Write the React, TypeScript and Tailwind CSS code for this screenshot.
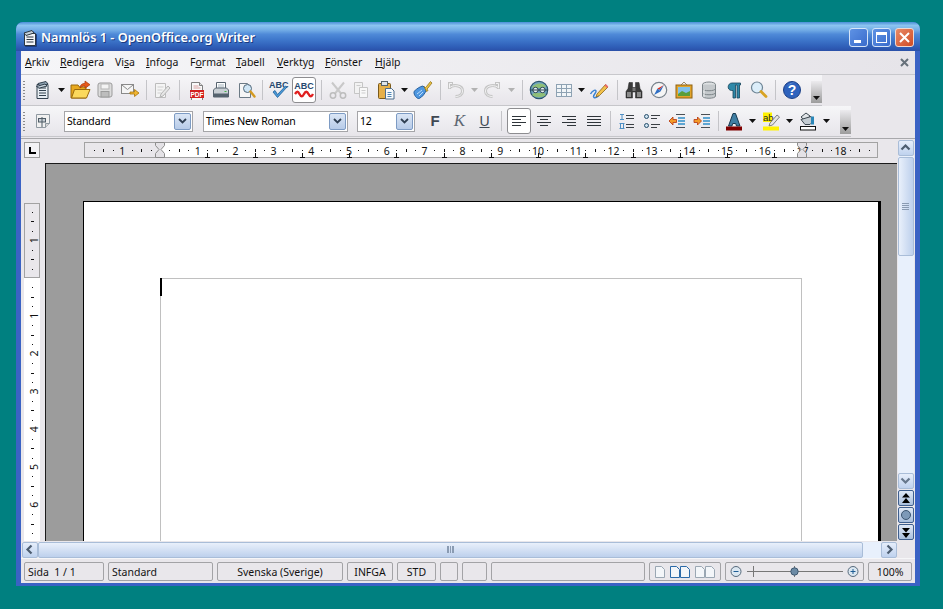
import React from "react";

const FONT = "font-['Noto_Sans','Liberation_Sans',sans-serif]";

type P = { children: React.ReactNode; s?: number; h?: number };
const Svg = ({ children, s = 20, h }: P) => (
  <svg width={s} height={h ?? s} viewBox={`0 0 ${s} ${h ?? s}`} className="block">
    {children}
  </svg>
);

const DocIcon = () => (
  <Svg>
    <path d="M4 4.500h11v14H4z" fill="#e8eef3" stroke="#33424f" />
    <path d="M6 8h7M6 10.500h7M6 13h7M6 15.500h7" stroke="#33424f" />
    <path d="M5 3.500 13 1.500l2 2.500-8 2z" fill="#8fa4b4" stroke="#33424f" />
    <path d="M3.500 6.500 12 4l2 2-8 2.200z" fill="#c6d3dc" stroke="#33424f" />
  </Svg>
);
const Open = () => (
  <Svg s={22}>
    <path d="M2 6h7l1.500 2H17v11H2z" fill="#e7a91e" stroke="#9a6a0c" />
    <path d="M2.500 19 5.500 10.500H21L17.500 19z" fill="#fbd95c" stroke="#9a6a0c" />
    <path d="M11 9c0-3 2-4.500 5-4.700V2l5 3.700-5 3.600V7c-2 0-3.500.6-5 2z" fill="#e8591a" stroke="#a33a08" strokeWidth=".7" />
  </Svg>
);
const Save = () => (
  <Svg>
    <rect x="3" y="3" width="14" height="14" rx="2" fill="#dcdcdc" stroke="#9b9b9b" />
    <rect x="6" y="4" width="8" height="5" fill="#f3f3f3" stroke="#b5b5b5" />
    <rect x="6" y="11.500" width="8" height="5.500" fill="#bdbdbd" stroke="#9b9b9b" />
  </Svg>
);
const Mail = () => (
  <Svg>
    <rect x="1.500" y="4.500" width="12" height="9" fill="#f5f5f5" stroke="#8a8a8a" />
    <path d="M2 5l5.500 4.500L13 5" fill="none" stroke="#8a8a8a" />
    <path d="M10 12h4.500V9.500l4.500 3.500-4.500 3.500V14H10z" fill="#f2b632" stroke="#a87509" strokeWidth=".8" />
  </Svg>
);
const Sep = () => <div className="w-px h-[20px] bg-[#c4c4c8]" />;
const EditDoc = () => (
  <Svg>
    <path d="M3.500 3.500h10v14h-10z" fill="#f4f4f4" stroke="#bcbcbc" />
    <path d="M5.500 7h6M5.500 10h5M5.500 13h4" stroke="#cfcfcf" />
    <path d="M9 14l7-8 2 2-7 8-3 1z" fill="#e6e6e6" stroke="#b5b5b5" />
  </Svg>
);
const Pdf = () => (
  <Svg>
    <path d="M4.500 2.500h8l3 3v15h-11z" fill="#f8f8f8" stroke="#7f7f7f" />
    <path d="M12.500 2.500v3h3" fill="#ddd" stroke="#7f7f7f" />
    <path d="M6.500 6h5M6.500 8h7" stroke="#d8a0a0" />
    <rect x="3" y="10" width="14" height="8" fill="#d3201f" />
    <text x="10" y="16.500" fontSize="6.500" fontWeight="700" fill="#fff" textAnchor="middle" fontFamily="Liberation Sans">PDF</text>
  </Svg>
);
const Print = () => (
  <Svg>
    <path d="M5.500 2.500h9v7h-9z" fill="#fff" stroke="#56636e" />
    <path d="M7 5h6M7 7h6" stroke="#a5b3bd" />
    <path d="M2.500 10l2-2h11l2 2v7h-15z" fill="#c9cfd4" stroke="#56636e" />
    <rect x="3" y="13.500" width="14" height="3.500" fill="#56636e" />
    <rect x="13.500" y="11" width="2" height="1" fill="#47b04b" />
  </Svg>
);
const Preview = () => (
  <Svg>
    <path d="M3.500 3.500h8l3 3v11h-11z" fill="#f6f6f6" stroke="#6c7a85" />
    <circle cx="11.500" cy="8.500" r="4" fill="#cfe6f6" stroke="#52687a" />
    <path d="M14.500 11.500l4 5" stroke="#d49a20" strokeWidth="2.400" strokeLinecap="round" />
  </Svg>
);
const Spell = () => (
  <Svg s={22}>
    <text x="1" y="9" fontSize="9" fontWeight="700" fill="#27486e" fontFamily="Liberation Sans">ABC</text>
    <path d="M5 13l4.500 5.500L19 8l-1.500-1-8 8.500L7 11.500z" fill="#4b9ad8" stroke="#1e5f99" strokeWidth=".8" />
  </Svg>
);
const AutoSpell = () => (
  <Svg s={22}>
    <text x="11" y="10" fontSize="9" fontWeight="700" fill="#27486e" textAnchor="middle" fontFamily="Liberation Sans">ABC</text>
    <path d="M2 15c2-3 3-3 4.500 0s3 3 4.500 0 3-3 4.500 0 3 3 4.500 0" fill="none" stroke="#e02020" strokeWidth="2.400" />
  </Svg>
);
const Cut = () => (
  <Svg>
    <path d="M4 2.500l9 11M16 2.500l-9 11" stroke="#c9c9c9" strokeWidth="2" />
    <circle cx="5" cy="15.500" r="2.700" fill="none" stroke="#bdbdbd" strokeWidth="1.500" />
    <circle cx="15" cy="15.500" r="2.700" fill="none" stroke="#bdbdbd" strokeWidth="1.500" />
  </Svg>
);
const Copy = () => (
  <Svg>
    <path d="M3.500 2.500h8v11h-8z" fill="#f2f2f2" stroke="#c5c5c5" />
    <path d="M8.500 7.500h8v10h-8z" fill="#f8f8f8" stroke="#c5c5c5" />
    <path d="M10.500 10.500h4M10.500 13h4M5.500 5.500h4" stroke="#cdcdcd" />
  </Svg>
);
const Paste = () => (
  <Svg>
    <rect x="2.500" y="3.500" width="12" height="15" rx="1" fill="#e5b04a" stroke="#7b5a1a" />
    <rect x="5.500" y="1.500" width="6" height="4" fill="#dfe6ec" stroke="#55636e" />
    <path d="M9.500 8.500h6l2.500 2.500v8h-8.500z" fill="#f7fafc" stroke="#4c6d8c" />
    <path d="M11.500 12.500h4M11.500 14.500h4M11.500 16.500h4" stroke="#4d86b6" />
  </Svg>
);
const Brush = () => (
  <Svg>
    <path d="M1 11.500c3-3 6-5 9-5.500l3.500 3.500C12.500 13 9 17.500 6 18.500c-2 .5-5.500-3.500-5-7z" fill="#4f97e0" stroke="#27609e" />
    <path d="M4 14l5-4M6 16l4-4" stroke="#bcdcf8" />
    <path d="M11 6.500l1.500 1 1-1 4-5 1.500 1.500-4 5-1 1 1 1.500-1.500 1z" fill="#e9c243" stroke="#8a6a10" strokeWidth=".7" />
  </Svg>
);
const Undo = ({ flip }: { flip?: boolean }) => (
  <Svg>
    <g transform={flip ? "translate(20,0) scale(-1,1)" : undefined}>
      <path d="M7 3.500H3.500V9M3.500 8C6 4.500 16.500 4.500 16.500 11c0 3.500-3 5.500-7 5.500" fill="none" stroke="#c4c4c4" strokeWidth="3" />
      <path d="M6 3.500H3.500V8M3.500 8C6 4.500 16.500 4.500 16.500 11c0 3.500-3 5.500-7 5.500" fill="none" stroke="#f2f2f3" strokeWidth="1" />
    </g>
  </Svg>
);
const Nav = () => (
  <Svg s={22}>
    <circle cx="11" cy="11" r="8.700" fill="#6fa5bf" stroke="#2d566e" strokeWidth="1.200" />
    <path d="M4 8c3-4 10-5 14-1l-2 2H6zM4 16c4 3 10 3 14 0l-2-2H6z" fill="#8fbf78" />
    <circle cx="7.500" cy="11" r="2.700" fill="#e8f2f6" stroke="#27414f" />
    <circle cx="14.500" cy="11" r="2.700" fill="#e8f2f6" stroke="#27414f" />
    <path d="M2.500 11h17" stroke="#27414f" />
  </Svg>
);
const Table = () => (
  <Svg>
    <rect x="2.500" y="4.500" width="15" height="12" fill="#f1f5f8" stroke="#8ea2b3" />
    <path d="M2.500 8.500h15M2.500 12.500h15M7.500 4.500v12M12.500 4.500v12" stroke="#8ea2b3" />
  </Svg>
);
const Draw = () => (
  <Svg>
    <path d="M1.500 14c2-4 6-5 5.500-2.500S3 16 5 17.500c2 1 4-1 5-2" fill="none" stroke="#3a82d2" strokeWidth="1.400" />
    <path d="M8 14l8.500-9.500 2.500 2.500-8.500 8.500-3.500 1.500z" fill="#f2c14b" stroke="#8a6518" strokeWidth=".8" />
    <path d="M15.500 5.500l2.500 2.500 1.300-1.500-2.500-2.500z" fill="#e86a6a" />
  </Svg>
);
const Binoc = () => (
  <Svg>
    <path d="M5 2.500h3.500v5H11.500v-5H15l1 6 2 3v6.500h-6.500v-6h-3v6H2V11.500l2-3z" fill="#3a3a3a" stroke="#222" strokeWidth=".5" />
    <rect x="3" y="12" width="4" height="5" fill="#8b8b8b" />
    <rect x="13" y="12" width="4" height="5" fill="#8b8b8b" />
    <rect x="8.500" y="8" width="3" height="3" fill="#777" />
  </Svg>
);
const Compass = () => (
  <Svg>
    <circle cx="10" cy="10" r="7.700" fill="#f5f5f5" stroke="#77828b" strokeWidth="1.200" />
    <path d="M15 5l-6.500 3.500L10 10z" fill="#e03020" />
    <path d="M5 15l3.500-6.500L11.500 11.500z" fill="#2f6fc4" />
    <path d="M15 5L11.500 11.500 10 10z" fill="#2f6fc4" />
  </Svg>
);
const Gallery = () => (
  <Svg>
    <path d="M7 5l3-3 3 3" fill="none" stroke="#9b8a68" />
    <rect x="2" y="5" width="16" height="13" fill="#e3a42a" stroke="#8f6212" />
    <rect x="4" y="7" width="12" height="9" fill="#7fc0ea" />
    <path d="M4 14l4-3 4 2 4-2v5H4z" fill="#5a9e3a" />
  </Svg>
);
const Db = () => (
  <Svg>
    <ellipse cx="10" cy="4.500" rx="6.500" ry="2.500" fill="#dfe2e4" stroke="#7d8589" />
    <path d="M3.500 4.500v11.500c0 3 13 3 13 0V4.500" fill="#c5c9cc" stroke="#7d8589" />
    <path d="M3.500 8.500c0 3 13 3 13 0M3.500 12.500c0 3 13 3 13 0" fill="none" stroke="#7d8589" />
    <path d="M5 9v8" stroke="#eef0f1" />
  </Svg>
);
const Pilcrow = () => (
  <Svg>
    <path d="M16.500 3H8C3.500 3 2.500 10 7.500 10.500H9V18h2.500V5h1.500v13h2.500V5h1z" fill="#2e88a8" stroke="#17445a" strokeWidth=".8" />
  </Svg>
);
const Zoom = () => (
  <Svg>
    <circle cx="8" cy="7.500" r="5.500" fill="#dceefa" stroke="#6e8494" strokeWidth="1.200" />
    <path d="M12 11.500l5 5" stroke="#d8a324" strokeWidth="2.800" strokeLinecap="round" />
  </Svg>
);
const Help = () => (
  <Svg>
    <circle cx="10" cy="10" r="8.500" fill="#2f63bd" stroke="#1b3f86" />
    <path d="M5 7c1-3 4-5 8-4-5 0-7 2-8 4z" fill="#8fb3ea" />
    <text x="10" y="15" fontSize="14" fontWeight="700" fill="#fff" textAnchor="middle" fontFamily="Liberation Sans">?</text>
  </Svg>
);
const StyleIco = () => (
  <Svg>
    <path d="M3.500 3.500h13v9l-4 4h-9z" fill="#f0f0f0" stroke="#8f99a1" />
    <path d="M12.500 16.500v-4h4" fill="#d4d4d4" stroke="#8f99a1" />
    <rect x="5.500" y="7.500" width="7" height="3.500" fill="#c9d0d6" stroke="#4f5c66" />
    <path d="M9 6v10" stroke="#4f5c66" />
  </Svg>
);
const Numbered = () => (
  <Svg>
    <path d="M9 4.500h8M9 7.500h8M9 13.500h8M9 16.500h8" stroke="#3a3f44" strokeWidth="1.200" />
    <path d="M3 3.500h4M5 3.500v5M3 8.500h4M2.500 12.500h5M3.500 12.500v5M6.500 12.500v5M2.500 17.500h5" stroke="#4f8fc4" />
  </Svg>
);
const Bullets = () => (
  <Svg>
    <circle cx="4.500" cy="5.500" r="2" fill="#cde2f0" stroke="#274e6b" />
    <circle cx="4.500" cy="14.500" r="2" fill="#cde2f0" stroke="#274e6b" />
    <path d="M9 4.500h9M9 7.500h6M9 13.500h9M9 16.500h6" stroke="#3a3f44" strokeWidth="1.200" />
  </Svg>
);
const Indent = ({ right }: { right?: boolean }) => (
  <Svg>
    <path d="M9 3.500h9M9 16.500h9" stroke="#4a4f55" />
    <path d="M11 7h7M11 10h7M11 13h7" stroke="#2f8fc9" strokeWidth="1.500" />
    {right ? (
      <path d="M2 8.500h3.500V6l4 4-4 4v-2.500H2z" fill="#f29a28" stroke="#b5340c" strokeWidth=".8" />
    ) : (
      <path d="M9.500 8.500H6V6l-4 4 4 4v-2.500h3.500z" fill="#f29a28" stroke="#b5340c" strokeWidth=".8" />
    )}
  </Svg>
);
const FontColor = () => (
  <Svg>
    <path d="M4.500 15L9 2.500h2.500L16 15h-3.500l-.8-2.500H8.700L7.900 15z" fill="#3f7ea3" stroke="#16384e" />
    <rect x="2" y="15.500" width="16" height="4" fill="#800000" />
  </Svg>
);
const Highlight = () => (
  <Svg>
    <rect x="2" y="1.500" width="9" height="9.500" fill="#fff200" />
    <text x="2" y="10" fontSize="9.500" fill="#222" fontFamily="Liberation Sans">ab</text>
    <path d="M9 12l7-8 2.500 2-7 8-3.500 1z" fill="#e5e5e5" stroke="#666" strokeWidth=".8" />
    <rect x="2" y="15.500" width="16" height="4" fill="#fff200" />
  </Svg>
);
const Bg = () => (
  <Svg>
    <path d="M3 6l5-4 4 3-4.500 5z" fill="#e0e4e7" stroke="#3d4850" />
    <path d="M3 8.500l4 5h5l3-3-2-5z" fill="#c4ccd2" stroke="#3d4850" />
    <path d="M13 5.500h3v8h-3z" fill="#2b87b8" />
    <rect x="2.500" y="15.500" width="15" height="3.500" fill="#fff" stroke="#111" />
  </Svg>
);

const Dd = () => (
  <svg width="7" height="4" viewBox="0 0 7 4" className="block"><path d="M0 0h7L3.500 4z" fill="#111" /></svg>
);
const DdGray = () => (
  <svg width="7" height="4" viewBox="0 0 7 4" className="block"><path d="M0 0h7L3.500 4z" fill="#b2b2b2" /></svg>
);

const Slot = ({ w, children, active }: { w: number; children?: React.ReactNode; active?: boolean }) => (
  <div className="flex items-center justify-center shrink-0" style={{ width: w }}>
    {active ? (
      <div className="w-[24px] h-[26px] bg-white border border-[#8d8d90] rounded-[3px] flex items-center justify-center">{children}</div>
    ) : (
      children
    )}
  </div>
);

const Grip = () => (
  <div className="w-[8px] ml-[2px] flex flex-col gap-[2px] shrink-0">
    {[0, 1, 2, 3, 4, 5, 6].map((i) => (
      <div key={i} className="w-[2px] h-[1px] bg-[#8b8b8b]" />
    ))}
  </div>
);

const Overflow = ({ h }: { h: number }) => (
  <div
    className="w-[11px] ml-auto self-end mb-[2px] bg-gradient-to-b from-[#ecebee] to-[#9d9d9d] flex items-end justify-center pb-[3px] shrink-0"
    style={{ height: h }}
  >
    <Dd />
  </div>
);

const Combo = ({ w, label, ml }: { w: number; label: string; ml: number }) => (
  <div
    className="h-[21px] bg-white border border-[#a5a5a8] flex items-center justify-between pl-[2px] pr-[1px] shrink-0 text-[10.5px] tracking-[-0.15px] text-black"
    style={{ width: w, marginLeft: ml }}
  >
    <span className="pt-[2px]">{label}</span>
    <div className="w-[17px] h-[17px] rounded-[2px] border border-[#7d9bc4] bg-gradient-to-b from-[#dbe6f5] to-[#b7cbe8] flex items-center justify-center">
      <svg width="9" height="6" viewBox="0 0 9 6"><path d="M1 1l3.500 3.500L8 1" fill="none" stroke="#2f3f52" strokeWidth="1.800" /></svg>
    </div>
  </div>
);

const Chevron = ({ dir, color = "#4d5d70" }: { dir: "u" | "d" | "l" | "r"; color?: string }) => {
  const d = { u: "M1.500 6.500L5.500 2.500l4 4", d: "M1.500 2.500l4 4 4-4", l: "M6.500 1.500l-4 4 4 4", r: "M3.500 1.500l4 4-4 4" }[dir];
  return (
    <svg width="11" height="11" viewBox="0 0 11 11" className={dir === "d" || dir === "u" ? "mt-[1px]" : ""}>
      <path d={d} fill="none" stroke={color} strokeWidth="2.200" />
    </svg>
  );
};

const ScrollBtn = ({ children, h = 16, w = 16 }: { children: React.ReactNode; h?: number; w?: number }) => (
  <div
    className="border border-[#a9bdd8] rounded-[2px] bg-gradient-to-b from-[#e6eefb] to-[#bfd2ee] flex items-center justify-center shrink-0"
    style={{ width: w, height: h }}
  >
    {children}
  </div>
);

const PageBtn = ({ children }: { children: React.ReactNode }) => (
  <div className="w-[16px] h-[16px] border border-[#3f5f8e] rounded-[2px] bg-gradient-to-b from-[#dfe8f6] to-[#a9bfdd] flex items-center justify-center shrink-0">
    {children}
  </div>
);

const HRuler = () => {
  const x0 = 76; // margin start within the svg (x = 160 on screen)
  const step = 37.8;
  const marks: React.ReactNode[] = [];
  for (let i = -2; i <= 19; i++) {
    for (const [off, kind] of [[0.25, "d"], [0.5, "t"], [0.75, "d"]] as [number, string][]) {
      const x = x0 + (i + off) * step;
      if (x < 6 || x > 786) continue;
      if (kind === "d") marks.push(<rect key={`${i}${off}`} x={Math.round(x)} y={8} width={1} height={1} fill="#111" />);
      else marks.push(<rect key={`${i}${off}`} x={Math.round(x)} y={7} width={1} height={3} fill="#111" />);
    }
  }
  const nums = Array.from({ length: 18 }, (_, i) => i + 1).map((n) => (
    <text key={n} x={x0 + n * step} y={13} fontSize={10.5} textAnchor="middle" fill="#111" fontFamily="Noto Sans, sans-serif">{n}</text>
  ));
  const tabs = Array.from({ length: 13 }, (_, i) => x0 + (i + 1) * 47.25).map((x) => (
    <path key={x} d={`M${Math.round(x) + 0.5} 11v5M${Math.round(x) - 2} 15.500h5`} stroke="#111" fill="none" />
  ));
  const Hour = ({ x }: { x: number }) => (
    <path d={`M${x - 4.5} .5h9v3l-3.500 4 3.500 4v4h-9v-4l3.500-4-3.500-4z`} fill="#e4e2e6" stroke="#8c8c8c" />
  );
  return (
    <svg width="796" height="18" viewBox="0 0 796 18" className="block">
      <rect x=".5" y=".5" width="793" height="15" fill="#e9e7eb" stroke="#a2a2a2" />
      <rect x={x0} y="1" width="642" height="14" fill="#fff" />
      {marks}
      <text x={x0 - step} y={13} fontSize={10.5} textAnchor="middle" fill="#111" fontFamily="Noto Sans, sans-serif">1</text>
      {nums}
      {tabs}
      <Hour x={x0} />
      <Hour x={718} />
    </svg>
  );
};

const VRuler = () => {
  const y0 = 75; // margin start (y = 278 on screen)
  const step = 37.8;
  const marks: React.ReactNode[] = [];
  for (let i = -2; i <= 7; i++) {
    for (const [off, kind] of [[0.25, "d"], [0.5, "t"], [0.75, "d"]] as [number, string][]) {
      const y = y0 + (i + off) * step;
      if (y < 4 || y > 345) continue;
      if (kind === "d") marks.push(<rect key={`${i}${off}`} x={8} y={Math.round(y)} width={1} height={1} fill="#111" />);
      else marks.push(<rect key={`${i}${off}`} x={7} y={Math.round(y)} width={3} height={1} fill="#111" />);
    }
  }
  const label = (n: number, y: number) => (
    <text key={y} x={0} y={0} fontSize={10.5} textAnchor="middle" fill="#111" fontFamily="Noto Sans, sans-serif" transform={`translate(13.500 ${y}) rotate(-90)`}>{n}</text>
  );
  return (
    <svg width="17" height="339" viewBox="0 0 17 339" className="block">
      <rect x="0" y="0" width="16" height="339" fill="#fff" />
      <rect x=".5" y=".5" width="15" height="74" fill="#e9e7eb" stroke="#a2a2a2" />
      {marks}
      {label(1, y0 - step)}
      {[1, 2, 3, 4, 5, 6].map((n) => label(n, y0 + n * step))}
    </svg>
  );
};

const Cell = ({ w, children, center, ml = 4, graphic }: { w: number; children?: React.ReactNode; center?: boolean; ml?: number; graphic?: boolean }) => (
  <div
    className={`h-[19px] border border-[#a3a3a6] rounded-[2px] flex items-center shrink-0 text-[10.5px] text-[#111] ${graphic ? "" : "pt-[3px]"} ${center ? "justify-center" : "pl-[3px]"}`}
    style={{ width: w, marginLeft: ml }}
  >
    {children}
  </div>
);

const ViewPage = ({ c, d = false }: { c: string; d?: boolean }) => (
  <svg width={d ? 20 : 10} height="12" viewBox={d ? "0 0 20 12" : "0 0 10 12"} className="block">
    <path d="M.5.500h6l3 3v8h-9z" fill="#f3f6f9" stroke={c} />
    {d && <path d="M10.500.5h6l3 3v8h-9z" fill="#f3f6f9" stroke={c} />}
  </svg>
);

const MENUS: [string, string, string, number][] = [
  ["", "A", "rkiv", 35],
  ["", "R", "edigera", 55],
  ["Vi", "s", "a", 31],
  ["", "I", "nfoga", 44],
  ["F", "o", "rmat", 46],
  ["", "T", "abell", 41],
  ["", "V", "erktyg", 48],
  ["", "F", "önster", 50],
  ["", "H", "jälp", 40],
];

const TB = "h-[31px] flex items-center bg-gradient-to-b from-[#f6f6f8] to-[#e7e5ea] border-b border-[#c6c6ca] shrink-0";

export default function App() {
  return (
    <div className={`w-[943px] h-[609px] bg-[#008080] pt-[22px] pl-[16px] overflow-hidden ${FONT}`}>
      <div className="w-[904px] h-[564px] flex flex-col rounded-t-[7px] overflow-hidden bg-[#3a62c4]">
        {/* title bar */}
        <div className="h-[29px] shrink-0 flex items-center pt-[2px] pl-[7px] pr-[6px] bg-[linear-gradient(#4a90d8_0%,#8cc4f0_12%,#72ace6_28%,#4f8ad8_42%,#3f78cc_60%,#2f5fb8_85%,#2a50a8_100%)]">
          <div className="[filter:drop-shadow(1px_1px_0_#1c3b80)]">
            <svg width="14" height="16" viewBox="0 0 14 16" className="block">
              <path d="M1.500 3.500h11v12h-11z" fill="#f3f5f8" stroke="#2b3640" />
              <path d="M3.500 7h7M3.500 9.500h7M3.500 12h7" stroke="#2b3640" />
              <path d="M1 3l8-2.500L11 3 3 5.500z" fill="#c5d1da" stroke="#2b3640" />
            </svg>
          </div>
          <span className="ml-[4px] text-white text-[12.7px] font-semibold [text-shadow:1px_1px_0_#1c3b80] whitespace-nowrap">Namnlös 1 - OpenOffice.org Writer</span>
          <div className="ml-auto flex gap-[4px]">
            {["min", "max"].map((k) => (
              <div key={k} className="w-[19px] h-[19px] rounded-[3px] border border-[#d7e5f8] bg-gradient-to-br from-[#5e92e4] to-[#3a6ccc] flex items-center justify-center">
                {k === "min" ? (
                  <div className="w-[7px] h-[3px] bg-white mt-[7px] -ml-[2px]" />
                ) : (
                  <div className="w-[11px] h-[11px] border border-white border-t-[3px]" />
                )}
              </div>
            ))}
            <div className="w-[19px] h-[19px] rounded-[3px] border border-[#f0d8d0] bg-gradient-to-br from-[#e88a66] to-[#cf4a22] flex items-center justify-center">
              <svg width="11" height="11" viewBox="0 0 11 11"><path d="M1 1l9 9M10 1l-9 9" stroke="#fff" strokeWidth="2" /></svg>
            </div>
          </div>
        </div>

        {/* window body */}
        <div className="flex-1 min-h-0 mx-[5px] mb-[3px] flex flex-col bg-[#e9e7eb]">
          {/* menu */}
          <div className="h-[24px] shrink-0 flex items-center pl-[4px] pr-[6px] bg-gradient-to-r from-[#f6f6f8] to-[#e6e4e9] border-b border-[#c8c8cc] text-[10.5px] text-[#111]">
            {MENUS.map(([a, u, b, w]) => (
              <div key={u + b} className="shrink-0" style={{ width: w }}>
                {a}
                <u>{u}</u>
                {b}
              </div>
            ))}
            <svg width="9" height="9" viewBox="0 0 9 9" className="ml-auto"><path d="M1 1l7 7M8 1L1 8" stroke="#66707a" strokeWidth="2" /></svg>
          </div>

          {/* toolbar 1 */}
          <div className={`${TB} w-[801px]`}>
            <Grip />
            <Slot w={24}><DocIcon /></Slot>
            <Slot w={12}><Dd /></Slot>
            <Slot w={26}><Open /></Slot>
            <Slot w={24}><Save /></Slot>
            <Slot w={25}><Mail /></Slot>
            <Slot w={8}><Sep /></Slot>
            <Slot w={24}><EditDoc /></Slot>
            <Slot w={10}><Sep /></Slot>
            <Slot w={25}><Pdf /></Slot>
            <Slot w={24}><Print /></Slot>
            <Slot w={25}><Preview /></Slot>
            <Slot w={8}><Sep /></Slot>
            <Slot w={26}><Spell /></Slot>
            <Slot w={24} active><AutoSpell /></Slot>
            <Slot w={10}><Sep /></Slot>
            <Slot w={23}><Cut /></Slot>
            <Slot w={24}><Copy /></Slot>
            <Slot w={25}><Paste /></Slot>
            <Slot w={12}><Dd /></Slot>
            <Slot w={26}><Brush /></Slot>
            <Slot w={8}><Sep /></Slot>
            <Slot w={24}><Undo /></Slot>
            <Slot w={12}><DdGray /></Slot>
            <Slot w={24}><Undo flip /></Slot>
            <Slot w={14}><DdGray /></Slot>
            <Slot w={8}><Sep /></Slot>
            <Slot w={26}><Nav /></Slot>
            <Slot w={24}><Table /></Slot>
            <Slot w={10}><Dd /></Slot>
            <Slot w={26}><Draw /></Slot>
            <Slot w={10}><Sep /></Slot>
            <Slot w={24}><Binoc /></Slot>
            <Slot w={25}><Compass /></Slot>
            <Slot w={25}><Gallery /></Slot>
            <Slot w={25}><Db /></Slot>
            <Slot w={25}><Pilcrow /></Slot>
            <Slot w={25}><Zoom /></Slot>
            <Slot w={8}><Sep /></Slot>
            <Slot w={26}><Help /></Slot>
            <Overflow h={22} />
          </div>

          {/* toolbar 2 */}
          <div className={`${TB} w-[830px]`}>
            <Grip />
            <Slot w={24}><StyleIco /></Slot>
            <Combo w={129} label="Standard" ml={9} />
            <Combo w={145} label="Times New Roman" ml={10} />
            <Combo w={58} label="12" ml={9} />
            <Slot w={8} />
            <Slot w={24}><span className="text-[15px] font-bold text-[#3f4852] font-['Liberation_Sans',sans-serif]">F</span></Slot>
            <Slot w={25}><span className="text-[17px] italic text-[#5d6772] font-['Liberation_Serif',serif]">K</span></Slot>
            <Slot w={25}>
              <span className="text-[14px] text-[#3f4852] underline font-['Liberation_Sans',sans-serif]">U</span>
            </Slot>
            <Slot w={9}><Sep /></Slot>
            <Slot w={25} active>
              <svg width="14" height="11" viewBox="0 0 14 11"><path d="M0 .5h14M0 3.500h9M0 6.500h14M0 9.500h9" stroke="#2f353a" /></svg>
            </Slot>
            <Slot w={25}>
              <svg width="14" height="11" viewBox="0 0 14 11"><path d="M0 .5h14M3 3.500h8M0 6.500h14M3 9.500h8" stroke="#2f353a" /></svg>
            </Slot>
            <Slot w={25}>
              <svg width="14" height="11" viewBox="0 0 14 11"><path d="M0 .5h14M5 3.500h9M0 6.500h14M5 9.500h9" stroke="#2f353a" /></svg>
            </Slot>
            <Slot w={25}>
              <svg width="14" height="11" viewBox="0 0 14 11"><path d="M0 .5h14M0 3.500h14M0 6.500h14M0 9.500h14" stroke="#2f353a" /></svg>
            </Slot>
            <Slot w={8}><Sep /></Slot>
            <Slot w={25}><Numbered /></Slot>
            <Slot w={25}><Bullets /></Slot>
            <Slot w={25}><Indent /></Slot>
            <Slot w={25}><Indent right /></Slot>
            <Slot w={8}><Sep /></Slot>
            <Slot w={24}><FontColor /></Slot>
            <Slot w={12}><Dd /></Slot>
            <Slot w={25}><Highlight /></Slot>
            <Slot w={12}><Dd /></Slot>
            <Slot w={25}><Bg /></Slot>
            <Slot w={12}><Dd /></Slot>
            <Overflow h={24} />
          </div>

          {/* edit area */}
          <div className="flex-1 min-h-0 flex border-t border-[#a8a8ab] mt-px">
            <div className="flex-1 min-w-0 flex flex-col">
              <div className="h-[24px] shrink-0 flex pl-[3px] pt-[3px]">
                <div className="w-[16px] h-[16px] border border-[#9b9b9b] bg-[#f3f2f5] flex items-center justify-center shrink-0">
                  <div className="w-[7px] h-[7px] border-l-2 border-b-2 border-black" />
                </div>
                <div className="ml-[44px]"><HRuler /></div>
              </div>
              <div className="flex-1 min-h-0 flex">
                <div className="w-[24px] shrink-0 pl-[3px] pt-[40px] overflow-hidden"><VRuler /></div>
                <div className="flex-1 min-w-0 bg-[#9c9c9c] border-t border-l border-[#1a1a1a] pl-[37px] pt-[37px] overflow-hidden">
                  <div className="w-[798px] h-[400px] bg-white border-t border-l border-black border-r-[3px] pl-[76px] pt-[76px]">
                    <div className="w-[642px] h-[400px] border border-[#c0c0c0]">
                      <div className="w-[2px] h-[18px] bg-black -ml-px -mt-px" />
                    </div>
                  </div>
                </div>
              </div>
              {/* horizontal scrollbar */}
              <div className="h-[17px] shrink-0 flex items-center pl-[1px]">
                <ScrollBtn w={16} h={16}><Chevron dir="l" /></ScrollBtn>
                <div className="flex-1 min-w-0 h-[16px] flex bg-[#e8f0fc]">
                  <div className="w-[825px] h-[16px] rounded-[2px] border border-[#a9bdd8] bg-gradient-to-b from-[#e9f0fb] to-[#bdd0ec] flex items-center justify-center">
                    <div className="w-[7px] h-[7px] border-x border-[#8a9bb2] [background:repeating-linear-gradient(90deg,#8a9bb2_0,#8a9bb2_1px,transparent_1px,transparent_2px)]" />
                  </div>
                </div>
                <ScrollBtn w={16} h={16}><Chevron dir="r" /></ScrollBtn>
              </div>
            </div>

            {/* vertical scrollbar */}
            <div className="w-[18px] shrink-0 flex flex-col items-center pt-px bg-[#e9e7eb] pr-[1px]">
              <ScrollBtn><Chevron dir="u" /></ScrollBtn>
              <div className="flex-1 min-h-0 w-[16px] bg-[#e8f0fc]">
                <div className="h-[99px] mt-[1px] rounded-[2px] border border-[#a9bdd8] bg-gradient-to-r from-[#e9f0fb] to-[#bdd0ec] flex items-center justify-center">
                  <div className="w-[7px] h-[7px] [background:repeating-linear-gradient(0deg,#8a9bb2_0,#8a9bb2_1px,transparent_1px,transparent_2px)]" />
                </div>
              </div>
              <ScrollBtn><Chevron dir="d" color="#66778c" /></ScrollBtn>
              <div className="flex flex-col gap-px mt-px mb-[18px]">
                <PageBtn>
                  <svg width="10" height="11" viewBox="0 0 10 11"><path d="M5 0l4 4.500H1zM5 5l4 5H1z" fill="#000" /></svg>
                </PageBtn>
                <PageBtn>
                  <div className="w-[10px] h-[10px] rounded-full bg-[#7d99b8] border border-[#3c5570]" />
                </PageBtn>
                <PageBtn>
                  <svg width="10" height="11" viewBox="0 0 10 11"><path d="M1 1h8L5 5.500zM1 6h8l-4 5z" fill="#000" /></svg>
                </PageBtn>
              </div>
            </div>
          </div>

          {/* status bar */}
          <div className="h-[25px] shrink-0 flex items-start pt-[3px] border-t border-[#f6f6f8]">
            <Cell w={80} ml={3}><span className="whitespace-pre">Sida  1 / 1</span></Cell>
            <Cell w={105}>Standard</Cell>
            <Cell w={126} center>Svenska (Sverige)</Cell>
            <Cell w={46} center>INFGA</Cell>
            <Cell w={39} center>STD</Cell>
            <Cell w={18} />
            <Cell w={25} />
            <Cell w={154} />
            <Cell w={72} center graphic>
              <div className="flex items-center gap-[5px]">
                <ViewPage c="#9aa7b3" />
                <ViewPage c="#2b6aa8" d />
                <ViewPage c="#9aa7b3" d />
              </div>
            </Cell>
            <Cell w={139} graphic>
              <svg width="132" height="17" viewBox="0 0 132 17" className="block">
                <circle cx="7" cy="8.500" r="5" fill="#dbe7f1" stroke="#566a7c" />
                <path d="M4.500 8.500h5" stroke="#1f5d94" />
                <path d="M18 8.500h96" stroke="#777" />
                <path d="M24.500 3v11" stroke="#777" />
                <path d="M65.500 3v11" stroke="#777" />
                <circle cx="65.500" cy="8.500" r="3.700" fill="#6b8aa5" stroke="#3f5870" />
                <circle cx="124" cy="8.500" r="5" fill="#dbe7f1" stroke="#566a7c" />
                <path d="M121.500 8.500h5M124 6v5" stroke="#1f5d94" />
              </svg>
            </Cell>
            <Cell w={44} center>100%</Cell>
          </div>
        </div>
      </div>
    </div>
  );
}
